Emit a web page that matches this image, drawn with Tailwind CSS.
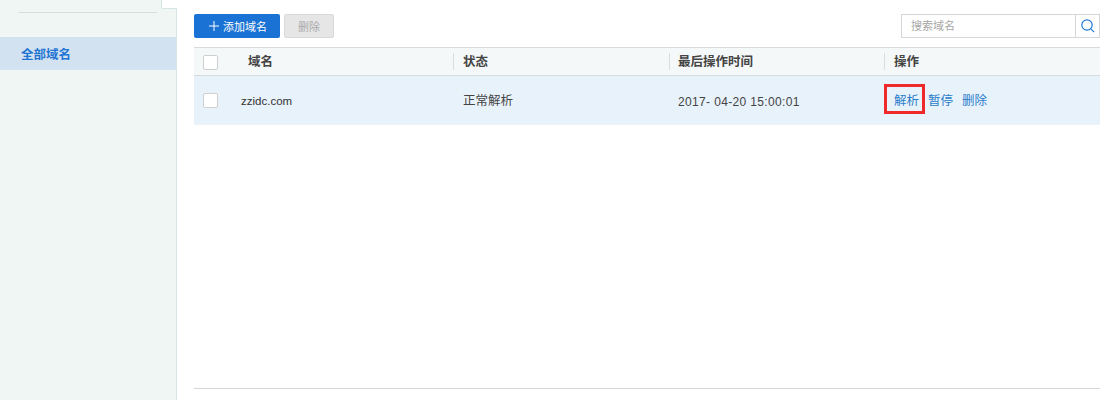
<!DOCTYPE html>
<html lang="zh">
<head>
<meta charset="utf-8">
<script src="https://cdn.jsdelivr.net/npm/@tailwindcss/browser@4"></script>
</head>
<body class="bg-white">
<div class="flex w-[1110px] h-[400px] overflow-hidden bg-white text-[12px] font-['Liberation_Sans','Noto_Sans_CJK_SC',sans-serif]">
  <aside class="relative w-[177px] h-full shrink-0 bg-[#f0f6f4] border-r border-[#d5e4e4]">
    <div class="absolute left-[161px] top-0 w-[16px] h-[9px] bg-white border-l border-b border-[#d5e4e4] rounded-bl-[2px]"></div>
    <div class="ml-[18px] w-[139px] h-[13px] border-b border-[#d3e0e0]"></div>
    <div class="mt-[24px] h-[33px] pl-[21px] pt-[3px] flex items-center bg-[#d3e2f0] text-[#1f75d3] text-[12.5px] font-bold">全部域名</div>
  </aside>
  <main class="ml-[17px] w-[906px] flex flex-col h-full">
    <div class="mt-[14px] h-[24px] flex items-center">
      <button class="w-[86px] h-[24px] flex items-center justify-center gap-[4px] pl-[2px] pt-[2px] rounded-[2px] bg-[#1a73d4] text-white text-[11px]">
        <svg class="w-[10px] h-[10px] mb-[2px]" viewBox="0 0 10 10" fill="none" stroke="#ffffff" stroke-width="1"><path d="M5 0v10M0 5h10"/></svg>
        <span>添加域名</span>
      </button>
      <button class="ml-[4px] w-[50px] h-[24px] pt-[2px] rounded-[2px] bg-[#e6e6e6] border border-[#dadada] text-[#ababab] text-[11px]">删除</button>
      <div class="ml-auto flex h-[24px] w-[199px] border border-[#d3d7d9] bg-white">
        <div class="flex-1 pl-[9px] pt-[1px] flex items-center text-[#a6a6a6] text-[11px] border-r border-[#d3d7d9]">搜索域名</div>
        <div class="w-[23px] flex items-center justify-center">
          <svg class="w-[16px] h-[16px]" viewBox="0 0 16 16" fill="none" stroke="#1f7ad6" stroke-width="1.2"><circle cx="7" cy="7" r="5.2"/><path d="M10.8 10.8l3.4 3.4"/></svg>
        </div>
      </div>
    </div>
    <div class="mt-[9px] h-[29px] grid grid-cols-[259px_216px_215px_216px] items-center bg-[#f5f8f8] border-y border-[#d8dcdd] font-bold text-[#444] text-[12.5px]">
      <div class="flex items-center pl-[9px] pt-[1px]">
        <span class="w-[15px] h-[15px] rounded-[2px] border border-[#cfcfcf] bg-white"></span>
        <span class="ml-[30px]">域名</span>
      </div>
      <div class="h-[17px] flex items-center border-l border-[#dcdcdc] pl-[9px] pt-[1px]">状态</div>
      <div class="h-[17px] flex items-center border-l border-[#dcdcdc] pl-[8px] pt-[1px]">最后操作时间</div>
      <div class="h-[17px] flex items-center border-l border-[#dcdcdc] pl-[9px] pt-[1px]">操作</div>
    </div>
    <div class="h-[49px] grid grid-cols-[259px_216px_215px_216px] items-center bg-[#e8f2fb] border-b border-[#eef3f7] text-[#444]">
      <div class="flex items-center pl-[9px]">
        <span class="w-[15px] h-[15px] rounded-[2px] border border-[#cfcfcf] bg-white"></span>
        <span class="ml-[23px] pt-[3px] text-[11.5px] text-[#333]">zzidc.com</span>
      </div>
      <div class="pl-[10px] pt-[3px] text-[12.5px]">正常解析</div>
      <div class="pl-[9px] pt-[3px] tracking-[0.35px]">2017- 04-20 15:00:01</div>
      <div class="flex items-center pl-[10px] pt-[3px] gap-[9px] text-[#2a7cc9] text-[12.5px]">
        <span class="relative">解析<span class="absolute left-[-10px] top-[-8px] w-[41px] h-[30px] border-[3px] border-[#f02a2a]"></span></span>
        <span>暂停</span>
        <span>删除</span>
      </div>
    </div>
    <div class="mt-[263px] h-px bg-[#d6d6da]"></div>
  </main>
</div>
</body>
</html>
